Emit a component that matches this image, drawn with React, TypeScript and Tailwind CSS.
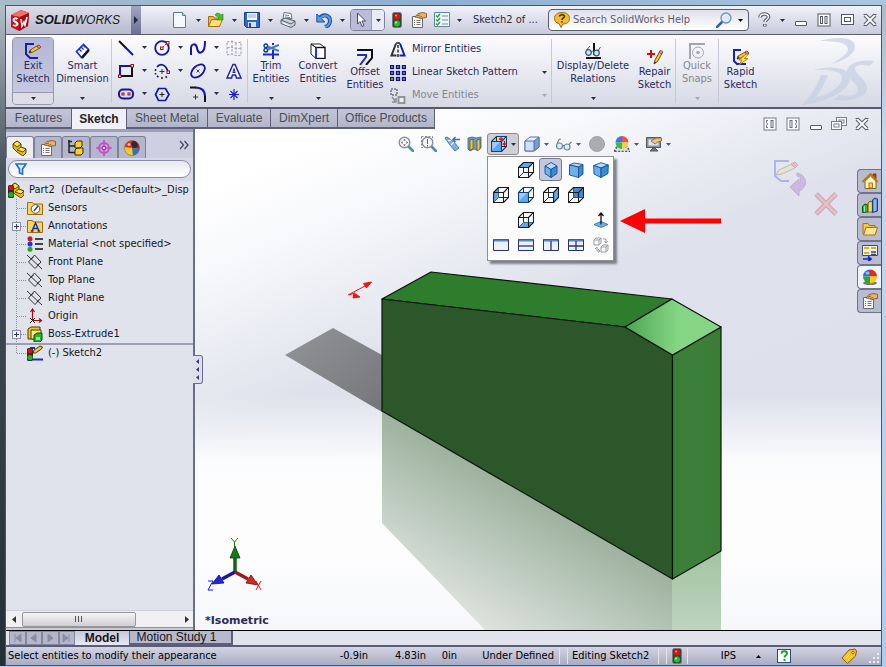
import type { ReactNode } from 'react';
import clsx from 'clsx';

const UI_FONT = "font-['DejaVu_Sans_Condensed','DejaVu_Sans',sans-serif]";
const ARIAL = "font-['Liberation_Sans',Arial,sans-serif]";

function Svg({ children, size = 16, className }: { children: ReactNode; size?: number; className?: string }) {
  return (
    <svg viewBox={`0 0 ${size} ${size}`} width={size} height={size} fill="none" className={clsx('shrink-0', className)} aria-hidden="true">
      {children}
    </svg>
  );
}

function Caret({ className = 'text-[#2b2d4a]' }: { className?: string }) {
  return (
    <svg viewBox="0 0 5 3" width="5" height="3" className={clsx('shrink-0', className)} aria-hidden="true">
      <path d="M0 0h5L2.5 3z" fill="currentColor" />
    </svg>
  );
}

/* ---------- Title bar icons ---------- */

const LogoCube = () => (
  <Svg size={22}>
    <path d="M2 6l10-5 8 3-1 13-9 5-8-4z" fill="#c1131b" />
    <path d="M2 6l10-5 8 3-9 4z" fill="#f0706c" />
    <path d="M11 8l9-4-1 13-9 5z" fill="#a30c14" />
    <path d="M8.500 10c-1.500-1-4-1-4 1s4 2 4 4-3 2-4.500 1" stroke="#fff" strokeWidth="2" />
    <path d="M12 10l1 7 2-4 1 3 2-8" stroke="#fff" strokeWidth="1.600" />
  </Svg>
);

const NewIcon = () => (
  <Svg>
    <path d="M1.500 .5h9l3 3v12h-12z" fill="#f4f9fd" stroke="#5d7d92" />
    <path d="M10.500 .5v3h3" fill="#c5dbe8" stroke="#5d7d92" />
  </Svg>
);

const OpenIcon = () => (
  <Svg>
    <path d="M.5 14.500v-10h5l1 1.500h5v8z" fill="#f0b93a" stroke="#a56d0c" />
    <path d="M.5 14.500l3-7h11l-3 7z" fill="#ffe07a" stroke="#a56d0c" />
    <path d="M7 3c1-2 4-2.500 6 0l2-1v6h-6l2-2c-1-2-3-2-4-3z" fill="#3fc32e" stroke="#1f7d16" strokeWidth=".6" />
  </Svg>
);

const SaveIcon = () => (
  <Svg>
    <path d="M.5 .5h15v15h-13l-2-2z" fill="#2e69c9" stroke="#183f8c" />
    <rect x="3" y="1" width="10" height="7" fill="#fff" />
    <path d="M4 3h8M4 5h8" stroke="#8ba3c7" />
    <rect x="4" y="10" width="8" height="5" fill="#d9dee8" />
    <rect x="5" y="11" width="2" height="4" fill="#234b94" />
  </Svg>
);

const PrintIcon = () => (
  <Svg>
    <path d="M3 7l1-6.500 7 1 1 5z" fill="#fff" stroke="#667281" />
    <path d="M5 3l4 .5M5 5l5 .5" stroke="#4f87c6" />
    <path d="M1 8l4-2 10 3v4l-4 2.500-10-4z" fill="#ccd2d9" stroke="#56606c" />
    <path d="M1 8l10 4 4-3" stroke="#56606c" />
    <path d="M3 11l6 2.500" stroke="#fff" />
  </Svg>
);

const UndoIcon = () => (
  <Svg>
    <path d="M3 7c4-6 11-4 11 2 0 3-2 5-5 6" stroke="#1c4f9c" strokeWidth="4" />
    <path d="M.8 2v8h8z" fill="#5b9be2" stroke="#1c4f9c" />
    <path d="M4 6.500c4-5 10-3 10 2.500 0 3-2 5-5 6" stroke="#5b9be2" strokeWidth="2" />
  </Svg>
);

const CursorIcon = () => (
  <Svg>
    <path d="M4.500 1v11l2.500-2.500 2 5 2-1-2-4.500h3.500z" fill="#fff" stroke="#444a60" />
  </Svg>
);

const TrafficLight = () => (
  <svg viewBox="0 0 10 16" width="10" height="16" className="shrink-0" aria-hidden="true">
    <rect x=".5" y=".5" width="9" height="15" rx="2" fill="#3b3f3d" stroke="#777" />
    <circle cx="5" cy="4.500" r="3" fill="#e01313" />
    <circle cx="5" cy="11.500" r="3" fill="#17c91c" />
    <circle cx="4" cy="3.500" r="1" fill="#ff8a80" />
    <circle cx="4" cy="10.500" r="1" fill="#a7ffa1" />
  </svg>
);

const PropertiesIcon = () => (
  <Svg>
    <path d="M1.500 4.500h10v11h-10z" fill="#f8f8f8" stroke="#6a6a6a" />
    <path d="M3 8.500h1M5.500 8.500h4M3 10.500h1M5.500 10.500h4M3 12.500h1M5.500 12.500h4" stroke="#777" />
    <path d="M4 5l3-3.500 5-1 3.500 1v4l-4 .5-2 1-1-1z" fill="#e5b26e" stroke="#7b4f1c" strokeWidth=".8" />
    <path d="M6 4l3-1M8 5.500l3-1" stroke="#7b4f1c" strokeWidth=".8" />
  </Svg>
);

const ChecklistIcon = () => (
  <Svg>
    <path d="M.5 .5h15v14H.5z" fill="#eef6fa" stroke="#5d8aa2" />
    <path d="M2 3.500l1.500 1.500L6 2M2 7.500L3.500 9 6 6M2 11.500L3.500 13 6 10" stroke="#2d9a32" strokeWidth="1.300" />
    <path d="M8 4h6M8 8h6M8 12h6" stroke="#6a90a6" />
  </Svg>
);

const HelpBubble = () => (
  <Svg>
    <path d="M8 .5c5 0 7.500 2.500 7.500 6S13 12 9 12l-2 3.500-2-4C2 11 .5 9 .5 6.500.5 3 3 .5 8 .5z" fill="#f4bd2e" stroke="#9a6c10" />
    <path d="M5.500 4.500c0-2.500 5-2.500 5 0 0 1.500-2.500 1.500-2.500 3.500M8 9.200v1.500" stroke="#3a3020" strokeWidth="1.500" />
  </Svg>
);

const MagnifierIcon = () => (
  <Svg>
    <path d="M1 15l5-5" stroke="#2f67b0" strokeWidth="2.500" strokeLinecap="round" />
    <circle cx="10" cy="6" r="5" fill="#d8ecfa" stroke="#6f93b5" strokeWidth="1.300" />
    <path d="M7.500 5c.5-1.500 1.500-2 3-2" stroke="#fff" />
  </Svg>
);

const QuestionIcon = () => (
  <Svg>
    <path d="M4 5.500C4 1 12.500 1 12.500 5c0 2.500-3.500 2.500-3.500 5M8.800 12v2.500" stroke="#555b6c" strokeWidth="3.600" />
    <path d="M4 5.500C4 1 12.500 1 12.500 5c0 2.500-3.500 2.500-3.500 5M8.800 12.600v1.400" stroke="#f8f9fc" strokeWidth="1.500" />
  </Svg>
);

/* ---------- Window control glyphs ---------- */

const MinGlyph = () => (
  <Svg>
    <rect x="2.500" y="9.500" width="11" height="4" rx=".5" fill="#fff" stroke="#565a66" />
  </Svg>
);
const PauseGlyph = () => (
  <Svg>
    <rect x="2" y="2" width="12" height="12" fill="#fff" stroke="#565a66" />
    <rect x="4.500" y="4.500" width="2" height="7" fill="#fff" stroke="#565a66" />
    <rect x="9" y="4.500" width="2" height="7" fill="#fff" stroke="#565a66" />
  </Svg>
);
const MaxGlyph = () => (
  <Svg>
    <rect x="2.500" y="2.500" width="12" height="10" fill="#fff" stroke="#565a66" />
    <rect x="5.500" y="5.500" width="6" height="4" stroke="#565a66" />
  </Svg>
);
const CascadeGlyph = () => (
  <Svg>
    <rect x="5.500" y="1.500" width="10" height="8" fill="#fff" stroke="#777b88" />
    <rect x="8" y="4" width="5" height="3" stroke="#777b88" />
    <rect x=".5" y="5.500" width="10" height="8" fill="#fff" stroke="#777b88" />
    <rect x="3" y="8" width="5" height="3" stroke="#777b88" />
  </Svg>
);
const CloseGlyph = () => (
  <Svg>
    <path d="M3 3l10 10M13 3L3 13" stroke="#5c606c" strokeWidth="4" />
    <path d="M3 3l10 10M13 3L3 13" stroke="#fff" strokeWidth="1.800" />
    <path d="M1.500 2.500h3M11.500 2.500h3M1.500 13.500h3M11.500 13.500h3" stroke="#5c606c" />
  </Svg>
);
const DockGlyph = ({ right = false }: { right?: boolean }) => (
  <Svg className={right ? '-scale-x-100' : undefined}>
    <rect x="2" y="2" width="12" height="12" fill="#fff" stroke="#777b88" />
    <path d="M6 4.500H4.500v2L5.500 8l-1 1.500v2H6" stroke="#666a78" />
    <rect x="9" y="4.500" width="2" height="7" stroke="#666a78" />
  </Svg>
);

/* ---------- Ribbon icons ---------- */

const PencilShape = () => (
  <g>
    <path d="M4 10l1-3 7-4 2 2.500-7 4z" fill="#f7c62c" stroke="#5e430a" strokeWidth=".8" />
    <path d="M12 3l2-1 2 2-2 1.500z" fill="#ee8c96" stroke="#7d2a34" strokeWidth=".8" />
    <path d="M4 10l1-3 1.500 2z" fill="#222" />
  </g>
);

const ExitSketchIcon = () => (
  <Svg>
    <path d="M9 1H1v10l4 4h8" stroke="#1821a0" strokeWidth="2" />
    <PencilShape />
  </Svg>
);
const DimensionIcon = () => (
  <Svg>
    <path d="M1.500 8.500l7-7 5 5-7 8z" fill="#fff" stroke="#1730d0" strokeWidth="1.700" />
    <path d="M14 7l-7 8" stroke="#111" strokeWidth="2" />
    <path d="M4 6l2.500 2.500M6 4l2.500 2.500M8 2l2.500 2.500" stroke="#1730d0" strokeWidth="1.300" />
  </Svg>
);
const LineIcon = () => (
  <Svg>
    <path d="M1 1l7 7" stroke="#111" strokeWidth="2" />
    <path d="M7 7l8 8" stroke="#1010b8" strokeWidth="2" />
  </Svg>
);
const CircleIcon = () => (
  <Svg>
    <circle cx="8" cy="8" r="6.800" stroke="#1515a8" strokeWidth="1.800" />
    <path d="M9 7l4-4" stroke="#b01818" strokeDasharray="1.500 1" />
    <rect x="6.500" y="7" width="2.500" height="2.500" fill="#fff" stroke="#b01010" />
    <rect x="12.500" y="1.500" width="2.500" height="2.500" fill="#fff" stroke="#b01010" />
  </Svg>
);
const SplineIcon = () => (
  <Svg>
    <path d="M1 15V9c0-6 5-6 6-1s3 6 6 3c2-2 2-5 2-10" stroke="#1515b0" strokeWidth="2" />
  </Svg>
);
const PlaneGridIcon = () => (
  <Svg>
    <path d="M1 2l5-1 4 2 5-1v13l-5 1-4-2-5 1zM6 1v13M10 3v13M1 8l5-1 4 2 5-1" stroke="#9a9ca8" strokeDasharray="2.500 1.500" />
  </Svg>
);
const RectIcon = () => (
  <Svg>
    <path d="M2 13V3h12" stroke="#1515b0" strokeWidth="2" />
    <path d="M14 3v10H2" stroke="#111" strokeWidth="2" />
    <rect x=".5" y="12" width="2.500" height="2.500" fill="#fff" stroke="#b01010" />
    <rect x="13" y="1.500" width="2.500" height="2.500" fill="#fff" stroke="#b01010" />
  </Svg>
);
const ArcIcon = () => (
  <Svg>
    <path d="M3 4c3-4 9-3 11 5" stroke="#1515a8" strokeWidth="1.800" />
    <path d="M1.500 6v2M1.500 10v1.500M3 13l1.500 1M7 15h2M11.500 14.500l1.500-1" stroke="#222" strokeWidth="1.600" />
    <path d="M8 6v5M5.500 8.500h5" stroke="#333" />
    <rect x="13" y="8" width="2.500" height="2.500" fill="#fff" stroke="#b01010" />
  </Svg>
);
const EllipseIcon = () => (
  <Svg>
    <ellipse cx="8" cy="8" rx="8" ry="5" transform="rotate(-42 8 8)" stroke="#1515a8" strokeWidth="1.800" />
    <path d="M6.500 6.500l3 3M9.500 6.500l-3 3" stroke="#333" strokeWidth=".9" />
  </Svg>
);
const LetterAIcon = () => (
  <Svg>
    <path d="M1 15L7 1.500h2L15 15h-4.500l-1-3h-3l-1 3z" fill="#fff" stroke="#1c22b0" strokeWidth="1.500" />
    <path d="M6.800 9.500L8 5.500l1.200 4z" fill="#fff" stroke="#1c22b0" />
  </Svg>
);
const SlotIcon = () => (
  <Svg>
    <rect x="1" y="3.500" width="14" height="9" rx="4" stroke="#1515a8" strokeWidth="2" />
    <rect x="4" y="7" width="2" height="2" stroke="#b01010" />
    <rect x="10" y="7" width="2" height="2" stroke="#b01010" />
  </Svg>
);
const PolygonIcon = () => (
  <Svg>
    <path d="M4.500 2.500h7l3.500 6-3.500 6h-7L1.500 8.500z" stroke="#1515a8" strokeWidth="1.700" />
    <path d="M8 6v5M5.500 8.500h5" stroke="#222" />
  </Svg>
);
const FilletIcon = () => (
  <Svg>
    <path d="M0 1.500h6" stroke="#111" strokeWidth="2" />
    <path d="M5 1.500c7 0 10 3 10 9" stroke="#1515a8" strokeWidth="2" />
    <path d="M15 10v6" stroke="#111" strokeWidth="2" />
    <path d="M5.500 8.500v5M3 11h5" stroke="#333" />
  </Svg>
);
const PointIcon = () => (
  <Svg>
    <path d="M8 3v11M3 8.500h10M4.500 5l7 7M11.500 5l-7 7" stroke="#1b1bd0" strokeWidth="1.200" />
  </Svg>
);
const TrimIcon = () => (
  <Svg>
    <path d="M0 11.500h16M10 7v9M10 0v2" stroke="#1a2bd0" strokeWidth="2" />
    <circle cx="2.800" cy="2.800" r="1.800" stroke="#123a8c" strokeWidth="1.400" />
    <circle cx="2.800" cy="7.200" r="1.800" stroke="#123a8c" strokeWidth="1.400" />
    <path d="M4.500 3.500L16 8M4.500 6.500L16 2" stroke="#4279b5" strokeWidth="1.900" />
  </Svg>
);
const ConvertIcon = () => (
  <Svg>
    <path d="M1 1l5 3.500v11L1 11z" fill="#fff" stroke="#222" />
    <path d="M1 1h9l5 3.500H6z" fill="#fff" stroke="#222" />
    <rect x="6" y="4.500" width="9" height="11" fill="#fff" stroke="#111" strokeWidth="1.400" />
    <path d="M6 4.500v11" stroke="#1a37e0" strokeWidth="2" />
  </Svg>
);
const OffsetIcon = () => (
  <Svg>
    <path d="M0 1h15v6" stroke="#111" strokeWidth="2" />
    <path d="M15 6v3l-6 7" stroke="#111" strokeWidth="2" />
    <path d="M0 6h9v2l-6 8" stroke="#1a2bd0" strokeWidth="2" />
  </Svg>
);
const MirrorIcon = () => (
  <Svg>
    <path d="M6 1.500L1.500 13.500H6.500" stroke="#333" strokeWidth="2" />
    <path d="M10 1.500l4.500 12H9.500" stroke="#1a1ab8" strokeWidth="2" />
    <path d="M6 1h4" stroke="#222" strokeWidth="1.500" />
    <path d="M8 3v13" stroke="#222" strokeWidth="1.400" strokeDasharray="3 1.500" />
  </Svg>
);
const PatternIcon = () => (
  <Svg>
    {[0, 6, 12].map((y) =>
      [0, 6, 12].map((x) => (
        <rect key={`${x}-${y}`} x={x + 0.5} y={y + 0.5} width="3" height="3" fill={x === 0 && y === 12 ? '#aaa' : '#7c86ee'} stroke={x === 0 && y === 12 ? '#222' : '#141478'} strokeWidth="1.300" />
      )),
    )}
  </Svg>
);
const MoveIcon = () => (
  <Svg>
    <path d="M1 1h6v6H1z" stroke="#8c8c94" strokeWidth="2" strokeDasharray="2 1" />
    <rect x="8.500" y="9" width="6" height="6" fill="#eee" stroke="#8c8c94" strokeWidth="1.800" />
    <path d="M2 9l4 5M6 10v4H2" stroke="#8c8c94" strokeWidth="1.500" />
  </Svg>
);
const RelationsIcon = () => (
  <Svg>
    <path d="M9 0v12M1 15h15" stroke="#111" strokeWidth="2" />
    <circle cx="3.500" cy="9.500" r="2.800" fill="#cfe4f4" stroke="#33586e" strokeWidth="1.200" />
    <circle cx="11.500" cy="10" r="2.800" fill="#cfe4f4" stroke="#33586e" strokeWidth="1.200" />
    <path d="M1.500 7L5 3M13 8l2.500-4M6 9c1-1 2-1 3 0" stroke="#33586e" />
  </Svg>
);
const RepairIcon = () => (
  <Svg>
    <path d="M4 1v8M0 5h8" stroke="#d01010" strokeWidth="2" />
    <path d="M7 15l1-4 5-9 2.500 1.500-5 9z" fill="#f7c62c" stroke="#5e430a" strokeWidth=".9" />
    <path d="M12.200 3.500l1.300-2.500 2.300 1.500-1.300 2.500z" fill="#e88a8a" stroke="#803030" strokeWidth=".6" />
    <path d="M7 15l.7-2.500 1.500 1z" fill="#222" />
  </Svg>
);
const SnapsIcon = () => (
  <Svg>
    <path d="M1 16V1h15" stroke="#a3a5b0" strokeWidth="2" />
    <circle cx="9" cy="9.500" r="5.500" stroke="#a3a5b0" />
    <circle cx="9" cy="9.500" r="1.800" fill="#a3a5b0" />
  </Svg>
);
const RapidIcon = () => (
  <Svg>
    <path d="M8 1H1v11l3 3h9" stroke="#1821c0" strokeWidth="2" />
    <PencilShape />
    <path d="M13 5l-7 6h3l-3 5 9-6.500h-3.500l4-4.500z" fill="#ffe838" stroke="#a06c00" strokeWidth=".8" />
  </Svg>
);

const BrandMark = () => (
  <svg viewBox="0 0 72 70" width="72" height="70" fill="#c6cfe3" className="shrink-0 opacity-70" aria-hidden="true">
    <path d="M18 4c16-5 36-4 35 6-1 8-12 14-24 17 9-5 17-10 17-15 0-6-11-8-28-8z" />
    <path d="M11 33c17-5 38-3 37 9-1 11-22 23-48 26 8-8 15-19 19-30h7c-4 10-8 17-13 23 15-4 27-12 27-20 0-7-13-9-29-8z" />
    <path d="M72 24c-1 2-3 4-5 5-7-2-15-1-14 3 1 6 12 11 12 19 0 9-14 14-34 12 2-1 4-3 6-5 10 2 19 0 19-5 0-7-11-11-11-18 0-8 12-13 27-11z" />
  </svg>
);

/* ---------- Tree icons ---------- */

const PartShape = () => (
  <g stroke="#4d3b00" strokeWidth=".9">
    <path d="M1 4l4-3 4 3v3l5 2v4l-3 3-6-4-4-4z" fill="#eeb90d" />
    <path d="M1 4l4-3 4 3-4 3zM5 10l4-3 5 2-3 3z" fill="#ffe24c" />
  </g>
);
const PartIcon = () => <Svg><PartShape /></Svg>;
const PartRootIcon = () => (
  <Svg>
    <g transform="translate(2 0)"><PartShape /></g>
    <rect x="0" y="3" width="6" height="13" rx="1.500" fill="#2c2c2c" />
    <circle cx="3" cy="6" r="2.400" fill="#e01313" />
    <circle cx="3" cy="12.500" r="2.600" fill="#17b81c" />
  </Svg>
);
const SensorsIcon = () => (
  <Svg>
    <path d="M.5 14.500v-12h5l1 1.500h9v10.500z" fill="#fcd55a" stroke="#9b6c0c" />
    <circle cx="8.500" cy="9" r="4.300" fill="#fff" stroke="#555" />
    <path d="M7 11l4-5" stroke="#345" strokeWidth="1.400" />
  </Svg>
);
const AnnotationsIcon = () => (
  <Svg>
    <path d="M.5 14.500v-12h5l1 1.500h9v10.500z" fill="#fcd55a" stroke="#9b6c0c" />
    <path d="M5 13l3.500-8L12 13M6 10.500h5M3.800 13h2.700M10.500 13h2.700" stroke="#1232a8" strokeWidth="1.400" />
  </Svg>
);
const MaterialIcon = () => (
  <Svg>
    <circle cx="3" cy="2.800" r="2.500" fill="#e01414" />
    <circle cx="3" cy="8" r="2.500" fill="#1c38d8" />
    <circle cx="3" cy="13.200" r="2.500" fill="#16b028" />
    <path d="M8 3h8M8 8h8M8 13h8" stroke="#444" strokeWidth="2" />
  </Svg>
);
const PlaneIcon = () => (
  <Svg>
    <path d="M7.500 1l6.500 7-6 6.500L1.500 8zM0 1l15 14M4 5.500L6.500 3M10 12l2-2.500" stroke="#333" />
  </Svg>
);
const OriginIcon = () => (
  <Svg>
    <path d="M5.500 12V2M6 12.500h8M3.500 4l2-3 2 3M12 10.500l2.500 2-2.500 2" stroke="#a01010" strokeWidth="1.200" />
    <path d="M3 10l5 5M8 10l-5 5" stroke="#222" />
  </Svg>
);
const ExtrudeIcon = () => (
  <Svg>
    <path d="M1 3l3-2h9v10l-3 2H1z" fill="#f4c61c" stroke="#4d3b00" />
    <path d="M4 4h10v9H4z" fill="#ffe984" stroke="#4d3b00" />
    <path d="M7 9l3-2h5v7l-2 2H7z" fill="#28b030" stroke="#0d4d12" />
    <path d="M9 11h4v3H9z" fill="#8fe896" />
  </Svg>
);
const SketchNodeIcon = () => (
  <Svg>
    <path d="M3 3h5M6 14.500h10" stroke="#1a2bd0" strokeWidth="2" />
    <path d="M6 8l1-3 6-4 2.500 1-1 2-6 4z" fill="#f7c62c" stroke="#3a2a06" strokeWidth=".9" />
    <rect x="0" y="3" width="6" height="13" rx="1.500" fill="#2c2c2c" />
    <circle cx="3" cy="6" r="2.400" fill="#e01313" />
    <circle cx="3" cy="12.500" r="2.600" fill="#17b81c" />
  </Svg>
);
const ConfigIcon = () => (
  <Svg>
    <path d="M1 0v13M0 1.500h4M1 6h6M1 12.500h6" stroke="#222" strokeWidth="1.500" />
    <path d="M7 3l2-2h5v5l-2 2H7zM7 10l2-2h6v5l-2 2H7z" fill="#f7cf30" stroke="#3a2a06" />
  </Svg>
);
const TargetIcon = () => (
  <Svg>
    <circle cx="8" cy="8" r="5" stroke="#c74fc9" strokeWidth="2" />
    <path d="M8 0v16M0 8h16" stroke="#c74fc9" strokeWidth="1.700" />
    <rect x="6.500" y="6.500" width="3" height="3" fill="#f3d8f4" stroke="#a03aa6" />
  </Svg>
);
const BallIcon = () => (
  <Svg>
    <ellipse cx="8" cy="14" rx="7" ry="2" fill="#777" />
    <path d="M8 7.500V.5a7 7 0 0 0-7 7z" fill="#2f6fe0" />
    <path d="M8 7.500V.5a7 7 0 0 1 7 7z" fill="#e32a1c" />
    <path d="M8 7.500H1a7 7 0 0 0 7 7z" fill="#23a83a" />
    <path d="M8 7.500h7a7 7 0 0 1-7 7z" fill="#f9cd1b" />
    <ellipse cx="5.500" cy="4" rx="2" ry="1.500" fill="#fff" opacity=".5" />
  </Svg>
);
const AppearanceIcon = () => (
  <Svg>
    <circle cx="8" cy="8" r="7.500" fill="#f9cd1b" stroke="#666" strokeWidth=".6" />
    <path d="M8 8L.6 7A7.500 7.500 0 0 1 8 .5z" fill="#e0301c" />
    <path d="M8 8V.5a7.500 7.500 0 0 1 7.400 8.500z" fill="#b51c1c" />
    <path d="M8 8l7.400 1A7.500 7.500 0 0 1 9 15.400z" fill="#2f6fd0" />
    <ellipse cx="10.500" cy="4.500" rx="3" ry="3.500" transform="rotate(-30 10.500 4.500)" fill="#2a2a30" />
    <ellipse cx="5" cy="4.500" rx="1.500" ry="1.200" fill="#fff" opacity=".7" />
  </Svg>
);
const FilterIcon = () => (
  <svg viewBox="0 0 12 12" width="12" height="12" className="shrink-0" aria-hidden="true">
    <path d="M1 1h10L7.500 6v5l-3-1V6z" fill="#dceefb" stroke="#1d6fd0" strokeWidth="1.700" />
  </svg>
);

/* ---------- Heads-up view icons ---------- */

const faces: Record<string, string> = {
  top: '.5,5.5 5.5,.5 15.5,.5 10.500,5.5',
  left: '.5,5.5 5.5,.5 5.5,10.500 .5,15.5',
  front: '.5,5.5 10.500,5.5 10.500,15.5 .5,15.5',
  right: '10.500,5.5 15.5,.5 15.5,10.500 10.500,15.5',
  back: '5.5,.5 15.5,.5 15.5,10.500 5.5,10.500',
  bottom: '.5,15.5 5.5,10.500 15.5,10.500 10.500,15.5',
};

function ViewCube({ face, arrows = false }: { face: string; arrows?: boolean }) {
  return (
    <Svg>
      <path d="M5.500 .5v10h10M5.500 10.500l-5 5" stroke="#2a2a2e" />
      <polygon points={faces[face]} fill={face === 'back' ? '#3f88d2' : '#5ea6ee'} />
      {face === 'front' && <path d="M1 6h8L1 14z" fill="#9ccbf7" />}
      <path d="M.5 5.500h10v10H.5zM.5 5.500l5-5h10v10l-5 5M10.500 5.500l5-5" stroke={face === 'front' ? '#16406f' : '#1b1b1f'} strokeWidth="1.100" />
      {arrows && <path d="M10 1v4M8 3h4M13.500 5v5M11.500 8h4" stroke="#d01818" strokeWidth="1.300" />}
    </Svg>
  );
}

const cubeShapes = {
  iso: { top: 'M2 4l6-3.500L14 4 8 7.500z', left: 'M2 4l6 3.500v8L2 11.500z', right: 'M14 4L8 7.500v8l6-4z' },
  dimetric: { top: 'M1.500 3L6 1l9 1.500L10.500 5z', left: 'M1.500 3l9 2v10.500l-9-2.500z', right: 'M15 2.500L10.500 5v10.500L15 12z' },
  trimetric: { top: 'M.7 3.500L8 .7 15.300 3 8 6z', left: 'M.7 3.500L8 6v9.500L1 12z', right: 'M15.300 3L8 6v9.500l7-4z' },
};

function SolidCube({ kind }: { kind: keyof typeof cubeShapes }) {
  const shape = cubeShapes[kind];
  return (
    <Svg>
      <g stroke="#17508f" strokeWidth=".9" strokeLinejoin="round">
        <path d={shape.top} fill="#b4d9fa" />
        <path d={shape.left} fill="#6cb0f0" />
        <path d={shape.right} fill="#3f88d6" />
      </g>
    </Svg>
  );
}

const PaneIcon = ({ split = '' }: { split?: string }) => (
  <Svg>
    <path d="M.5 2.500h15v11H.5z" fill="#eaf1fb" stroke="#27356f" />
    <path d="M1 3.500h14" stroke="#5d7fd6" strokeWidth="2" />
    <path d={split} stroke="#27356f" strokeWidth="1.300" />
  </Svg>
);
const NormalToIcon = () => (
  <Svg>
    <path d="M1 12.500l7-3 7 3-7 3z" fill="#6eb4ea" stroke="#2468a4" strokeWidth=".8" />
    <path d="M8 12.500V1M5.500 4L8 1l2.500 3" stroke="#111" strokeWidth="1.300" />
  </Svg>
);
const LinkViewsIcon = () => (
  <Svg>
    <path d="M1 3l2-2h5v5L6 8H1zM1 3h5v5M6 3l2-2M8 10l2-2h5v5l-2 2H8zM8 10h5v5M13 10l2-2" stroke="#9a9ca3" />
    <path d="M10 2h3v3M11.500 4L13 6l2-2M4 10v4h2M2 12l2-2M5 12l2 2-2 1.500" stroke="#9a9ca3" />
  </Svg>
);

const Lens = ({ dashed = false }: { dashed?: boolean }) => (
  <Svg>
    {dashed && <rect x=".5" y=".5" width="11" height="11" stroke="#888" strokeDasharray="2 1.500" />}
    <path d="M11 11l4 4" stroke="#4f86cc" strokeWidth="2.600" strokeLinecap="round" />
    <circle cx="6.500" cy="6.500" r="5.300" fill="#f3f6f9" stroke="#8a9099" strokeWidth="1.400" />
    {dashed ? <path d="M6.500 3v5M6.500 9v1.500" stroke="#666" /> : <path d="M6.500 3l1.500 1.500H5zM6.500 10L8 8.500H5zM3 6.500L4.500 5v3zM10 6.500L8.500 5v3z" fill="#555" />}
  </Svg>
);
const PrevViewIcon = () => (
  <Svg>
    <path d="M1 2l5 7 5 6 4-3-5-6-7-5z" fill="#7db1e5" stroke="#4a78ac" />
    <path d="M4 5l3-1M7 9l3-3" stroke="#fff" strokeWidth="1.300" />
    <path d="M9 3.500h7M11.500 1L9 3.500 11.500 6" stroke="#3a6cc4" strokeWidth="1.500" />
  </Svg>
);
const SectionIcon = () => (
  <Svg>
    <path d="M1 2l4-1 4 1 5-1v11l-4 2-3-1-4 2-2-2z" fill="#5b9ce0" stroke="#4a6f99" strokeWidth=".9" />
    <path d="M3 4l3-1v10l-3 1zM10 4l3-1v10l-3 2z" fill="#f2c52b" stroke="#7b5a08" strokeWidth=".8" />
  </Svg>
);
const ShadedIcon = () => (
  <Svg>
    <path d="M1 5l5-4h9v10l-5 4H1z" fill="#eaf2fb" stroke="#5a74a8" />
    <path d="M10 5l5-4v10l-5 4z" fill="#6d9fe4" stroke="#5a74a8" />
    <path d="M1 5h9v10H1z" fill="#cfdff5" stroke="#5a74a8" />
  </Svg>
);
const GlassesIcon = () => (
  <Svg>
    <circle cx="3.500" cy="10" r="3" fill="#dcecf5" stroke="#748592" strokeWidth="1.200" />
    <circle cx="11" cy="11" r="3" fill="#dcecf5" stroke="#748592" strokeWidth="1.200" />
    <path d="M1 8l2-4.500 2-.5M13 8.500L15.500 6M6.500 10c.5-1 1-1 1.500 0" stroke="#748592" strokeWidth="1.200" />
  </Svg>
);
const SceneIcon = () => (
  <Svg>
    <path d="M0 15.500l3-5h10l3 5z" fill="#ddd" stroke="#555" strokeDasharray="2 1.500" strokeWidth="1.600" />
    <path d="M8 6.500V0a6.500 6.500 0 0 0-6.500 6.500z" fill="#3b78e4" />
    <path d="M8 6.500V0a6.500 6.500 0 0 1 6.500 6.500z" fill="#e5554a" />
    <path d="M8 6.500H1.500A6.500 6.500 0 0 0 8 13z" fill="#3db553" />
    <path d="M8 6.500h6.500A6.500 6.500 0 0 1 8 13z" fill="#f0cf4a" />
  </Svg>
);
const MonitorIcon = () => (
  <Svg>
    <rect x=".5" y="1.500" width="14" height="10" fill="#8a939b" stroke="#555b62" />
    <rect x="2.500" y="3.500" width="10" height="6" fill="#dfe6ea" />
    <path d="M4 15l3-3h2l3 3z" fill="#777" stroke="#555" />
    <path d="M5 5l5-3h5.500v3L12 6 9 8z" fill="#ecc28a" stroke="#8a5c25" strokeWidth=".8" />
  </Svg>
);

/* ---------- Task pane icons ---------- */

const HouseIcon = () => (
  <Svg>
    <path d="M11 1h3v5h-3z" fill="#c33a2c" stroke="#6a1c10" strokeWidth=".7" />
    <path d="M3 8v7.500h11V8L8.500 3z" fill="#fff3c0" stroke="#8a6412" />
    <path d="M.5 9L8.500 1l7 8" stroke="#b27d10" strokeWidth="2" />
    <rect x="7" y="10" width="3.500" height="5" fill="#f7ce55" stroke="#8a6412" strokeWidth=".8" />
  </Svg>
);
const BooksIcon = () => (
  <Svg>
    <path d="M.5 9L3 7l3 1v7l-5.500 .5z" fill="#2fb53a" stroke="#0d5a16" />
    <path d="M6 6l2-2 2.500 1v10H6z" fill="#f3c62c" stroke="#7c5c05" />
    <path d="M10.500 3l2-2 3 1v12l-5 1.500z" fill="#5e97e6" stroke="#1c3f80" />
    <path d="M2.500 9v6M8 6v9M13 3v11" stroke="#fff" strokeWidth=".8" opacity=".7" />
  </Svg>
);
const FolderIcon = () => (
  <Svg>
    <path d="M1 13V2.500h5l1.500 2H13V7" fill="#f5c545" stroke="#a9700b" />
    <path d="M1.500 14L4 6.500h11.500L13 14z" fill="#ffe591" stroke="#a9700b" />
  </Svg>
);
const PaletteIcon = () => (
  <Svg>
    <path d="M.5 .5h15v10H.5z" fill="#eef1f7" stroke="#3a4a6a" />
    <path d="M2 3h5M9 3h5M2 8h5" stroke="#d9b411" strokeWidth="2" />
    <path d="M9 7h5M9 9.500h5" stroke="#3a4a6a" strokeWidth="1.500" />
    <path d="M1 14h7M6 11.500L9 14l-3 2.500" stroke="#1424b8" strokeWidth="1.700" />
  </Svg>
);

/* ---------- Building blocks ---------- */

function IconButton({ label, className, children }: { label: string; className?: string; children: ReactNode }) {
  return (
    <button type="button" aria-label={label} className={clsx('flex shrink-0 items-center justify-center', className)}>
      {children}
    </button>
  );
}

function QuickTool({ label, children }: { label: string; children: ReactNode }) {
  return (
    <div className="flex">
      <IconButton label={label} className="w-6">{children}</IconButton>
      <IconButton label={`${label} options`} className="w-3"><Caret /></IconButton>
    </div>
  );
}

interface RibbonToolProps {
  icon: ReactNode;
  lines: [ReactNode, string];
  className: string;
  menu?: boolean;
  low?: boolean;
  disabled?: boolean;
}

function RibbonTool({ icon, lines, className, menu, low, disabled }: RibbonToolProps) {
  return (
    <button
      type="button"
      disabled={disabled}
      className={clsx('flex shrink-0 flex-col items-center leading-[13px]', low ? 'pt-[14px]' : 'pt-2', disabled ? 'text-[#85868f]' : 'text-[#2a2a60]', className)}
    >
      {icon}
      <span className="whitespace-nowrap">{lines[0]}</span>
      <span className="whitespace-nowrap">{lines[1]}</span>
      {menu && <Caret className={clsx('mt-3', disabled ? 'text-[#a6a7b0]' : 'text-[#2b2d4a]')} />}
    </button>
  );
}

const Divider = () => <div className="my-1 w-px shrink-0 bg-[#c6c8d6]" />;

const sketchTools: { label: string; icon: ReactNode; menu: boolean }[] = [
  { label: 'Line', icon: <LineIcon />, menu: true },
  { label: 'Circle', icon: <CircleIcon />, menu: true },
  { label: 'Spline', icon: <SplineIcon />, menu: true },
  { label: 'Plane', icon: <PlaneGridIcon />, menu: false },
  { label: 'Rectangle', icon: <RectIcon />, menu: true },
  { label: 'Arc', icon: <ArcIcon />, menu: true },
  { label: 'Ellipse', icon: <EllipseIcon />, menu: true },
  { label: 'Text', icon: <LetterAIcon />, menu: false },
  { label: 'Slot', icon: <SlotIcon />, menu: true },
  { label: 'Polygon', icon: <PolygonIcon />, menu: false },
  { label: 'Fillet', icon: <FilletIcon />, menu: true },
  { label: 'Point', icon: <PointIcon />, menu: false },
];

const commandTabs = [
  { name: 'Features', width: 'w-[66px]' },
  { name: 'Sketch', width: 'w-[55px]' },
  { name: 'Sheet Metal', width: 'w-[81px]' },
  { name: 'Evaluate', width: 'w-[63px]' },
  { name: 'DimXpert', width: 'w-[67px]' },
  { name: 'Office Products', width: 'w-[97px]' },
];

const treeItems: { label: string; icon: ReactNode; expandable?: boolean }[] = [
  { label: 'Sensors', icon: <SensorsIcon /> },
  { label: 'Annotations', icon: <AnnotationsIcon />, expandable: true },
  { label: 'Material <not specified>', icon: <MaterialIcon /> },
  { label: 'Front Plane', icon: <PlaneIcon /> },
  { label: 'Top Plane', icon: <PlaneIcon /> },
  { label: 'Right Plane', icon: <PlaneIcon /> },
  { label: 'Origin', icon: <OriginIcon /> },
  { label: 'Boss-Extrude1', icon: <ExtrudeIcon />, expandable: true },
  { label: '(-) Sketch2', icon: <SketchNodeIcon /> },
];

const viewOptions: { label: string; icon: ReactNode }[] = [
  { label: '', icon: null },
  { label: 'Top', icon: <ViewCube face="top" /> },
  { label: 'Isometric', icon: <SolidCube kind="iso" /> },
  { label: 'Dimetric', icon: <SolidCube kind="dimetric" /> },
  { label: 'Trimetric', icon: <SolidCube kind="trimetric" /> },
  { label: 'Left', icon: <ViewCube face="left" /> },
  { label: 'Front', icon: <ViewCube face="front" /> },
  { label: 'Right', icon: <ViewCube face="right" /> },
  { label: 'Back', icon: <ViewCube face="back" /> },
  { label: '', icon: null },
  { label: '', icon: null },
  { label: 'Bottom', icon: <ViewCube face="bottom" /> },
  { label: '', icon: null },
  { label: '', icon: null },
  { label: 'Normal To', icon: <NormalToIcon /> },
  { label: 'Single View', icon: <PaneIcon /> },
  { label: 'Two View Horizontal', icon: <PaneIcon split="M1 9h14" /> },
  { label: 'Two View Vertical', icon: <PaneIcon split="M8 4v9" /> },
  { label: 'Four View', icon: <PaneIcon split="M1 9h14M8 4v9" /> },
  { label: 'Link Views', icon: <LinkViewsIcon /> },
];

/* ---------- Sections ---------- */

function TitleBar() {
  return (
    <header className="flex h-[29px] border-b border-[#5a5d75] bg-linear-to-b from-[#f1f2fa] to-[#c9cbdc]">
      <button type="button" className={clsx('flex w-[125px] shrink-0 items-center gap-1 bg-linear-to-b from-[#dcdde9] to-[#b8bace] pl-[3px] italic text-[#17181c]', ARIAL)}>
        <LogoCube />
        <span className="text-[12px] whitespace-nowrap"><b className="text-[13px]">SOLID</b>WORKS</span>
      </button>
      <IconButton label="Expand menu" className="w-[10px] bg-linear-to-b from-[#a3a5c0] to-[#6e7096]">
        <svg viewBox="0 0 4 8" width="4" height="8"><path d="M0 0l4 4-4 4z" fill="#23244c" /></svg>
      </IconButton>
      <div className="flex pl-[27px]">
        <QuickTool label="New"><NewIcon /></QuickTool>
        <QuickTool label="Open"><OpenIcon /></QuickTool>
        <QuickTool label="Save"><SaveIcon /></QuickTool>
        <QuickTool label="Print"><PrintIcon /></QuickTool>
        <QuickTool label="Undo"><UndoIcon /></QuickTool>
        <div className="mx-[2px] my-[3px] flex w-[35px] overflow-hidden rounded-[4px] border border-[#7f8197]">
          <IconButton label="Select" className="w-[21px] border-r border-[#9b9db3] bg-[#b9bbd8]"><CursorIcon /></IconButton>
          <IconButton label="Select options" className="w-3 bg-[#e9eaf2]"><Caret /></IconButton>
        </div>
        <IconButton label="Rebuild" className="w-[20px]"><TrafficLight /></IconButton>
        <IconButton label="File Properties" className="w-6"><PropertiesIcon /></IconButton>
        <IconButton label="Options" className="w-[22px]"><ChecklistIcon /></IconButton>
        <IconButton label="More options" className="w-3"><Caret /></IconButton>
      </div>
      <div className="flex-1 self-center truncate pl-2 text-[#2a2b45]">Sketch2 of ...</div>
      <div className="my-[3px] flex w-[201px] items-center gap-[3px] rounded-[4px] border border-[#5a5d70] bg-linear-to-b from-[#dfe0ea] to-white pl-[5px]">
        <HelpBubble />
        <input aria-label="Search SolidWorks Help" placeholder="Search SolidWorks Help" className="min-w-0 flex-1 bg-transparent outline-none placeholder:text-[#5d5e68] placeholder:opacity-100" />
        <IconButton label="Search" className="w-[18px]"><MagnifierIcon /></IconButton>
        <IconButton label="Search options" className="w-2"><Caret className="text-black" /></IconButton>
        <span className="w-px" />
      </div>
      <div className="flex pl-1">
        <IconButton label="Help" className="w-[22px]"><QuestionIcon /></IconButton>
        <IconButton label="Help options" className="w-[14px]"><Caret /></IconButton>
        <IconButton label="Minimize" className="w-[23px]"><MinGlyph /></IconButton>
        <IconButton label="Tile" className="w-[23px]"><PauseGlyph /></IconButton>
        <IconButton label="Restore" className="w-[23px]"><MaxGlyph /></IconButton>
        <IconButton label="Close" className="w-[23px]"><CloseGlyph /></IconButton>
      </div>
    </header>
  );
}

function Ribbon() {
  return (
    <div className="flex h-[74px] border-b-2 border-[#55586f] bg-linear-to-b from-[#fcfcfe] to-[#d6d8e5]">
      <div className="my-[2px] ml-[6px] flex w-[42px] shrink-0 flex-col overflow-hidden rounded-[4px] border border-[#9799ad]">
        <button type="button" className="flex h-[55px] flex-col items-center border-b border-[#9799ad] bg-linear-to-b from-[#b4b6d6] to-[#c6c8e2] pt-[5px] leading-[13px] text-[#2a2a60]">
          <ExitSketchIcon />
          <span>Exit</span>
          <span>Sketch</span>
        </button>
        <IconButton label="Exit Sketch options" className="flex-1 bg-[#dcdde9]"><Caret /></IconButton>
      </div>
      <RibbonTool icon={<DimensionIcon />} lines={['Smart', 'Dimension']} menu className="w-[57px]" />
      <Divider />
      <div className="grid shrink-0 grid-cols-[36px_36px_36px_26px] content-start pt-[1px] pl-[1px]">
        {sketchTools.map((tool) => (
          <div key={tool.label} className="flex h-[23px]">
            <IconButton label={tool.label} className="w-[26px]">{tool.icon}</IconButton>
            {tool.menu && <IconButton label={`${tool.label} options`} className="w-[10px]"><Caret /></IconButton>}
          </div>
        ))}
      </div>
      <Divider />
      <RibbonTool icon={<TrimIcon />} lines={[<><u>T</u>rim</>, 'Entities']} menu className="w-[46px]" />
      <RibbonTool icon={<ConvertIcon />} lines={['Convert', 'Entities']} menu className="w-[48px]" />
      <RibbonTool icon={<OffsetIcon />} lines={['Offset', 'Entities']} low className="w-[46px]" />
      <div className="flex w-[163px] shrink-0 flex-col pt-[3px] pr-[4px] pl-[2px]">
        <button type="button" className="flex h-[23px] items-center gap-[6px] whitespace-nowrap text-[#2a2a60]">
          <MirrorIcon />Mirror Entities
        </button>
        <button type="button" className="flex h-[23px] items-center gap-[6px] whitespace-nowrap text-[#2a2a60]">
          <PatternIcon />Linear Sketch Pattern<span className="flex-1" /><Caret />
        </button>
        <button type="button" disabled className="flex h-[23px] items-center gap-[6px] whitespace-nowrap text-[#85868f]">
          <MoveIcon />Move Entities<span className="flex-1" /><Caret className="text-[#a6a7b0]" />
        </button>
      </div>
      <Divider />
      <RibbonTool icon={<RelationsIcon />} lines={['Display/Delete', 'Relations']} menu className="w-[82px]" />
      <RibbonTool icon={<RepairIcon />} lines={['Repair', 'Sketch']} low className="w-[41px]" />
      <Divider />
      <RibbonTool icon={<SnapsIcon />} lines={['Quick', 'Snaps']} menu disabled className="w-[42px]" />
      <Divider />
      <RibbonTool icon={<RapidIcon />} lines={['Rapid', 'Sketch']} low className="w-[43px]" />
      <div className="flex flex-1 justify-end overflow-hidden pt-[2px] pr-[7px]"><BrandMark /></div>
    </div>
  );
}

function CommandTabs() {
  return (
    <div role="tablist" className={clsx('flex h-5 text-[12px]', ARIAL)}>
      {commandTabs.map(({ name, width }) => (
        <button
          key={name}
          type="button"
          role="tab"
          aria-selected={name === 'Sketch'}
          className={clsx(
            'shrink-0 whitespace-nowrap border-r border-[#5d6078]',
            width,
            name === 'Sketch' ? 'bg-[#f0f1f6] font-bold text-[#22232c]' : 'border-b-2 bg-linear-to-b from-[#c4c6d8] to-[#b3b5ca] text-[#4a4c58]',
          )}
        >
          {name}
        </button>
      ))}
    </div>
  );
}

function TreeGutter({ expandable, last }: { expandable?: boolean; last: boolean }) {
  return (
    <svg viewBox="0 0 21 18" width="21" height="18" fill="none" className="shrink-0" aria-hidden="true">
      <path d={last ? 'M10.500 0v9' : 'M10.500 0v18'} stroke="#8a8c98" strokeDasharray="1 1" />
      <path d="M11 9.500h10" stroke="#8a8c98" strokeDasharray="1 1" />
      {expandable && (
        <>
          <rect x="6.500" y="5.500" width="8" height="8" fill="#f3f4f8" stroke="#8e909c" />
          <path d="M8 9.500h5M10.500 7v5" stroke="#2b3a80" />
        </>
      )}
    </svg>
  );
}

const managerTabs = [
  { label: 'FeatureManager', icon: <PartIcon /> },
  { label: 'PropertyManager', icon: <PropertiesIcon /> },
  { label: 'ConfigurationManager', icon: <ConfigIcon /> },
  { label: 'DimXpertManager', icon: <TargetIcon /> },
  { label: 'DisplayManager', icon: <AppearanceIcon /> },
];

function FeaturePanel() {
  return (
    <aside className="relative flex w-[189px] shrink-0 flex-col border-r-2 border-[#6b6e88] bg-[#e0e3ec]">
      <div className="flex h-[29px] items-end border-t-[3px] border-[#9da0b8] bg-[#cdd0e1]">
        {managerTabs.map(({ label, icon }, i) => (
          <IconButton
            key={label}
            label={label}
            className={clsx('h-[22px] w-7 rounded-t-[3px] border border-b-0 border-[#7d8098]', i === 0 ? 'bg-[#eceef6]' : 'bg-[#b4b7cc]')}
          >
            {icon}
          </IconButton>
        ))}
        <button type="button" aria-label="More managers" className="flex flex-1 items-center justify-end self-center pr-1">
          <Svg size={10}><path d="M1 1l3.500 4L1 9M5.500 1L9 5 5.500 9" stroke="#444860" strokeWidth="1.300" /></Svg>
        </button>
      </div>
      <div className="h-[23px] bg-[#d7d9e6] px-[2px] py-[2px]">
        <label className="flex h-[18px] items-center gap-2 rounded-full border border-[#8a8da5] bg-linear-to-b from-[#e8e9f0] to-white pl-[6px]">
          <FilterIcon />
          <input aria-label="Filter" className="min-w-0 flex-1 bg-transparent outline-none" />
        </label>
      </div>
      <ul className="flex-1 text-[#14151c]">
        <li className="flex h-[18px] items-center gap-[5px] pl-[2px] whitespace-pre">
          <PartRootIcon />
          <span>{'Part2  (Default<<Default>_Disp'}</span>
        </li>
        {treeItems.map(({ label, icon, expandable }, i) => {
          const last = i === treeItems.length - 1;
          return (
            <li key={label} className={clsx('flex h-[18px] items-center whitespace-nowrap', last && 'border-t-2 border-[#9c9eb6]')}>
              <TreeGutter expandable={expandable} last={last} />
              {icon}
              <span className="pl-[5px]">{label}</span>
            </li>
          );
        })}
      </ul>
      <div className="flex h-[17px] items-center border-t border-[#d0d1d8] bg-[#f0f0f2]">
        <IconButton label="Scroll left" className="w-4">
          <svg viewBox="0 0 4 7" width="4" height="7"><path d="M4 0v7L0 3.500z" fill="#333" /></svg>
        </IconButton>
        <div className="flex h-[15px] w-[114px] items-center justify-center rounded-[2px] border border-[#979797] bg-linear-to-b from-[#f5f5f5] to-[#cfcfd3]">
          <Svg size={8}><path d="M.5 1v6M3.500 1v6M6.500 1v6" stroke="#555" /></Svg>
        </div>
        <span className="flex-1" />
        <IconButton label="Scroll right" className="w-3">
          <svg viewBox="0 0 4 7" width="4" height="7"><path d="M0 0v7l4-3.500z" fill="#333" /></svg>
        </IconButton>
      </div>
      <div className="h-[3px] border-t border-[#8b8ea4] bg-[#c8cad8]" />
      <button
        type="button"
        aria-label="Collapse panel"
        className="absolute top-[226px] -right-[10px] flex h-[29px] w-[10px] flex-col items-center justify-evenly rounded-r-[3px] border border-l-0 border-[#6b6e88] bg-[#dddfea]"
      >
        {[0, 1, 2].map((i) => (
          <svg key={i} viewBox="0 0 3 5" width="3" height="5"><path d="M3 0v5L0 2.500z" fill="#3a3a88" /></svg>
        ))}
      </button>
    </aside>
  );
}

function HeadsUpToolbar() {
  return (
    <div className="relative flex h-[22px] justify-center pr-[10px]">
      <IconButton label="Zoom to Fit" className="w-[23px]"><Lens /></IconButton>
      <IconButton label="Zoom to Area" className="w-[23px]"><Lens dashed /></IconButton>
      <IconButton label="Previous View" className="w-[23px]"><PrevViewIcon /></IconButton>
      <IconButton label="Section View" className="w-[23px]"><SectionIcon /></IconButton>
      <div className="relative mr-[3px] ml-px">
        <IconButton label="View Orientation" className="h-[22px] w-8 gap-1 rounded-[3px] border border-[#8c8c90] bg-[#cfcfd4]">
          <ViewCube face="front" arrows />
          <Caret />
        </IconButton>
        <div role="menu" className="absolute top-full left-0 mt-px grid w-[127px] auto-rows-[25px] grid-cols-5 border border-[#8e9096] bg-[#fcfcfd] pb-[3px] shadow-[3px_3px_2px_rgba(60,60,70,0.6)]">
          {viewOptions.map(({ label, icon }, i) =>
            icon ? (
              <button
                key={label}
                type="button"
                role="menuitem"
                aria-label={label}
                className={clsx(
                  'flex items-center justify-center',
                  label === 'Isometric' && 'm-px rounded-[3px] border border-[#77798e] bg-[#c5c7dd]',
                )}
              >
                {icon}
              </button>
            ) : (
              <span key={i} />
            ),
          )}
        </div>
      </div>
      <div className="mr-1 flex">
        <IconButton label="Display Style" className="w-5"><ShadedIcon /></IconButton>
        <IconButton label="Display Style options" className="w-2"><Caret className="text-[#55577a]" /></IconButton>
      </div>
      <div className="mr-1 flex">
        <IconButton label="Hide/Show Items" className="w-5"><GlassesIcon /></IconButton>
        <IconButton label="Hide/Show options" className="w-2"><Caret className="text-[#55577a]" /></IconButton>
      </div>
      <IconButton label="Edit Appearance" className="mr-1 w-[22px]">
        <Svg><circle cx="8" cy="8" r="7.500" fill="#acacae" stroke="#a0a0a2" /></Svg>
      </IconButton>
      <div className="mr-1 flex">
        <IconButton label="Apply Scene" className="w-5"><SceneIcon /></IconButton>
        <IconButton label="Apply Scene options" className="w-2"><Caret className="text-[#55577a]" /></IconButton>
      </div>
      <div className="flex">
        <IconButton label="View Settings" className="w-5"><MonitorIcon /></IconButton>
        <IconButton label="View Settings options" className="w-2"><Caret className="text-[#55577a]" /></IconButton>
      </div>
    </div>
  );
}

function ModelScene() {
  return (
    <svg viewBox="195 129 686 501" className="absolute inset-0 h-full w-full" role="img" aria-label="Isometric view of the extruded part">
      <defs>
        <linearGradient id="reflectFront" gradientUnits="userSpaceOnUse" x1="530" y1="490" x2="450" y2="630">
          <stop offset="0" stopColor="#9bb09c" />
          <stop offset=".45" stopColor="#bccabd" />
          <stop offset="1" stopColor="#e6eae7" />
        </linearGradient>
        <linearGradient id="reflectSide" x1="0" y1="0" x2="0" y2="1">
          <stop offset="0" stopColor="#a3c4a3" />
          <stop offset="1" stopColor="#bdd3be" />
        </linearGradient>
        <linearGradient id="chamfer" x1="0" y1="0" x2="1" y2="0">
          <stop offset="0" stopColor="#4da454" />
          <stop offset=".55" stopColor="#85d684" />
          <stop offset="1" stopColor="#86d586" />
        </linearGradient>
        <linearGradient id="shadow" x1="0" y1="0" x2="1" y2="1">
          <stop offset="0" stopColor="#939497" />
          <stop offset="1" stopColor="#75767a" />
        </linearGradient>
        <linearGradient id="side" x1="0" y1="0" x2="1" y2="0">
          <stop offset="0" stopColor="#3b7f36" />
          <stop offset=".5" stopColor="#3c7e3b" />
          <stop offset="1" stopColor="#3a7d35" />
        </linearGradient>
      </defs>
      <polygon points="285,355 333,328 382,355 382,412" fill="url(#shadow)" />
      <polygon points="382,411 672,579 672,630 485,630 382,523" fill="url(#reflectFront)" />
      <polygon points="672,579 721,551 721,630 672,630" fill="url(#reflectSide)" />
      <g stroke="#0c140c" strokeWidth="1.200" strokeLinejoin="round">
        <polygon points="382,299 431,272 672,299 625,327" fill="#2d7d2d" />
        <polygon points="382,299 625,327 672.500,355 672.500,579 382,411" fill="#2b572a" />
        <polygon points="672.500,355 721,327 721,551 672.500,579" fill="url(#side)" />
        <polygon points="625,327 672,299 721,327 672.500,355" fill="url(#chamfer)" />
      </g>

      <g stroke="#f01414" fill="#f01414" strokeWidth="1">
        <path d="M348 295l17-9M349 295l6-2" fill="none" />
        <path d="M371.500 282l-5 6-3-4.500zM360 297l-7 1 1-5z" />
      </g>

      <path d="M620 221l25-12v9.500h76v5h-76v9.500z" fill="#fc0303" />

      {/* Orientation triad */}
      <path d="M235 573v-17" stroke="#146614" strokeWidth="3.500" />
      <path d="M235 546l5 12h-10z" fill="#167a16" stroke="#0b400b" strokeWidth=".8" />
      <path d="M235 572l-13 7" stroke="#1717a0" strokeWidth="3.500" />
      <path d="M212 584l7-9 5 8z" fill="#2525d8" stroke="#10106a" strokeWidth=".8" />
      <path d="M235 572l13 7" stroke="#a01717" strokeWidth="3.500" />
      <path d="M258 585l-7-10-5 8z" fill="#d82525" stroke="#6a1010" strokeWidth=".8" />
      <g fill="none" strokeWidth="1">
        <path d="M231 538l3.500 4 3.500-4M234.500 542v5" stroke="#118011" />
        <path d="M208 581h5l-5 9h5" stroke="#1515e0" />
        <path d="M256 581l5 9M261 581l-5 9" stroke="#e81515" />
      </g>
    </svg>
  );
}

const taskTabs = [
  { label: 'SolidWorks Resources', icon: <HouseIcon /> },
  { label: 'Design Library', icon: <BooksIcon /> },
  { label: 'File Explorer', icon: <FolderIcon /> },
  { label: 'View Palette', icon: <PaletteIcon /> },
  { label: 'Appearances', icon: <BallIcon /> },
  { label: 'Custom Properties', icon: <PropertiesIcon /> },
];

function Viewport() {
  return (
    <main className="relative flex min-w-0 flex-1 flex-col pt-1">
      <ModelScene />
      <HeadsUpToolbar />

      <div className="absolute -top-[13px] right-[8px] flex">
        <IconButton label="Dock left" className="w-[23px]"><DockGlyph /></IconButton>
        <IconButton label="Dock right" className="w-[23px]"><DockGlyph right /></IconButton>
        <IconButton label="Minimize document" className="w-[23px]"><MinGlyph /></IconButton>
        <IconButton label="Restore document" className="w-[23px]"><CascadeGlyph /></IconButton>
        <IconButton label="Close document" className="w-[23px]"><CloseGlyph /></IconButton>
      </div>

      <div className="absolute top-[29px] right-[43px] flex items-start gap-[2px] opacity-40">
        <button type="button" aria-label="Accept sketch">
          <Svg size={40}>
            <path d="M17 3H3v15l6 5h8" stroke="#5b6be0" strokeWidth="2" />
            <path d="M4 17l3-5 13-6 3 4-13 6z" fill="#f3e29a" stroke="#8a7c50" />
            <path d="M19 6l4-2 3 3-3 3z" fill="#e88a8a" stroke="#a05a5a" />
            <path d="M25 15c10 2 12 14 2 18v5l-9-9 9-8v5c3-3 2-8-2-8z" fill="#b27ad0" stroke="#8a5aa8" />
          </Svg>
        </button>
        <button type="button" aria-label="Cancel sketch" className="mt-[34px]">
          <Svg size={24}>
            <path d="M2 2l20 20M22 2L2 22" stroke="#a84a50" strokeWidth="5" />
            <path d="M2 2l20 20M22 2L2 22" stroke="#f08a90" strokeWidth="3" />
          </Svg>
        </button>
      </div>

      <div className="absolute top-10 right-0 flex flex-col">
        {taskTabs.map(({ label, icon }) => (
          <IconButton
            key={label}
            label={label}
            className={clsx('h-6 w-6 rounded-l-[4px] border border-r-0 border-[#70738c]', label === 'Appearances' ? 'bg-[#f2f3f8]' : 'bg-[#b9bbce]')}
          >
            {icon}
          </IconButton>
        ))}
      </div>

      <div className="relative mt-auto pb-px pl-[10px] text-[11px] font-bold text-[#2a2a58] font-['DejaVu_Sans',sans-serif]">*Isometric</div>
    </main>
  );
}

function ModelTabs() {
  const nav = ['M3 1v8M9 1L4 5l5 4z', 'M8 1L3 5l5 4z', 'M3 1l5 4-5 4z', 'M8 1v8M2 1l5 4-5 4z'];
  return (
    <div className={clsx('flex h-[15px] border-t border-black bg-[#e0e3ec] pl-[3px] text-[12px] leading-[13px] text-[#14151c]', ARIAL)}>
      <div className="flex w-[66px] shrink-0 bg-[#9a9cb2]">
        {nav.map((d) => (
          <button key={d} type="button" disabled aria-label="Scroll tabs" className="flex flex-1 items-center justify-center border border-[#85879f] bg-[#b4b6c9]">
            <Svg size={11}><path d={d} fill="#8b8da6" stroke="#8b8da6" /></Svg>
          </button>
        ))}
      </div>
      <button type="button" className="w-[55px] shrink-0 border-r border-[#5d6078] bg-linear-to-b from-[#c6c8da] to-[#e6e8f1] font-bold">Model</button>
      <button type="button" className="w-[103px] shrink-0 border-r-2 border-b-2 border-[#5d6078] bg-[#b6b8cc] pr-2 leading-[11px] whitespace-nowrap">Motion Study 1</button>
    </div>
  );
}

const StatusSep = () => <span className="h-4 w-px shrink-0 bg-[#e8e6dc]" />;

function StatusBar() {
  return (
    <footer className="flex h-5 items-center border-t-2 border-[#5a5d75] bg-linear-to-b from-[#d3d5e4] to-[#a9abc2] whitespace-nowrap text-black">
      <div className="min-w-0 flex-1 pl-[2px]">Select entities to modify their appearance</div>
      <div className="w-[30px] text-right">-0.9in</div>
      <div className="w-[58px] text-right">4.83in</div>
      <div className="w-[31px] text-right">0in</div>
      <div className="w-[102px] pr-[5px] text-right">Under Defined</div>
      <StatusSep />
      <span className="w-[7px]" />
      <StatusSep />
      <div className="w-[90px] pl-1">Editing Sketch2</div>
      <StatusSep />
      <span className="w-[7px]" />
      <StatusSep />
      <button type="button" aria-label="Rebuild status" className="flex w-5 justify-center"><TrafficLight /></button>
      <StatusSep />
      <button type="button" className="flex w-[79px] items-center justify-end gap-[20px] pr-[6px]">
        IPS
        <Caret className="rotate-180" />
      </button>
      <IconButton label="Quick tips" className="mr-[49px] ml-[9px]">
        <Svg>
          <rect x="1.500" y="1.500" width="13" height="13" fill="#fff" stroke="#27507a" />
          <path d="M5.500 5.500c0-3 5.500-3 5.500 0 0 2-2.500 1.500-2.500 4M8.500 11v2" stroke="#18a02c" strokeWidth="2" />
        </Svg>
      </IconButton>
      <IconButton label="Tags">
        <Svg>
          <path d="M1 10l7-8 6-1 1.500 2-1 5-8 7.500z" fill="#f7c42c" stroke="#8a5a08" />
          <circle cx="12" cy="4.500" r="1.200" fill="#fff" stroke="#8a5a08" />
          <path d="M5 10l4-4M7 12l4-4" stroke="#fff2b8" />
        </Svg>
      </IconButton>
      <Svg size={10} className="mt-1 mr-[2px] ml-3">
        <path d="M8 0h2v2H8zM4 4h2v2H4zM8 4h2v2H8zM0 8h2v2H0zM4 8h2v2H4zM8 8h2v2H8z" fill="#eceef4" />
      </Svg>
    </footer>
  );
}

export default function App() {
  return (
    <div className={clsx('flex min-h-screen flex-col bg-[#a9cdf0] text-[11px]', UI_FONT)}>
      <div className="h-[5px] bg-linear-to-r from-[#a8bccb] via-[#8fb0d4] to-[#a9c6e2]" />
      <div className="flex flex-1">
        <div className="w-[5px] bg-linear-to-b from-[#b3bfc8] via-[#46535c] via-25% to-[#222f36]" />
        <div className="flex min-w-0 flex-1 flex-col border border-[#4d5568]">
          <TitleBar />
          <Ribbon />
          <div className="flex flex-1 flex-col bg-[linear-gradient(to_bottom,transparent_55%,rgba(255,255,255,0.9)_68%,#fdfdfe_85%,#f6f7fa_100%),linear-gradient(158deg,#ffffff_18%,#f7f8fb_28%,#dfe2ec_46%,#dcdfea_100%)]">
            <CommandTabs />
            <div className="flex flex-1">
              <FeaturePanel />
              <Viewport />
            </div>
          </div>
          <ModelTabs />
          <StatusBar />
        </div>
        <div className="w-1 bg-linear-to-b from-[#a9bccb] via-[#c3d9ee] via-20% to-[#a9cdf0]" />
      </div>
      <div className="h-px bg-[#a9cdf0]" />
    </div>
  );
}
